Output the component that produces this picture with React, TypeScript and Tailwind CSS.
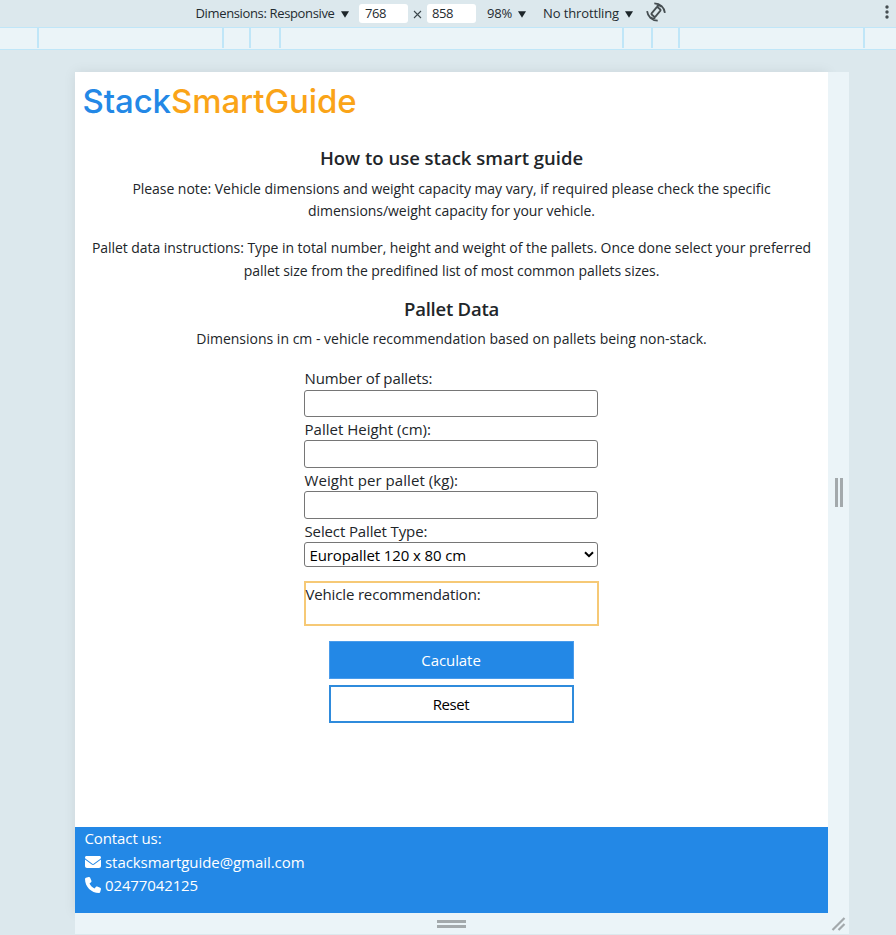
import type { ReactNode } from "react";

function Caret({ className = "" }: { className?: string }) {
  return (
    <svg width="8" height="7" viewBox="0 0 8 7" className={className}>
      <path d="M0 0.300h8L4 6.800z" fill="#1c2529" />
    </svg>
  );
}

function Toolbar() {
  return (
    <div className="flex h-[27px] items-center pl-[195.5px] text-[13px] text-[#1f2b30]">
      <span className="w-[145px] tracking-[-0.355px]">Dimensions: Responsive</span>
      <Caret className="mt-px" />
      <span className="ml-[10.5px] flex h-[19px] w-[49px] items-center rounded-[3px] bg-white pl-[6px] tracking-[-0.4px]">768</span>
      <svg width="9" height="9" viewBox="0 0 9 9" className="mt-[2px] ml-[5px]">
        <path d="M1 1l7 7M8 1l-7 7" stroke="#3c474c" strokeWidth="1.1" />
      </svg>
      <span className="ml-[5px] flex h-[19px] w-[49px] items-center rounded-[3px] bg-white pl-[5px] tracking-[-0.4px]">858</span>
      <span className="ml-[11px] w-[30.5px] tracking-[-0.2px]">98%</span>
      <Caret className="mt-px" />
      <span className="ml-[17.5px] w-[82px] tracking-[-0.12px]">No throttling</span>
      <Caret className="mt-px" />
      <svg width="20" height="20" viewBox="0 0 20 20" className="ml-[13px] -mt-[3px]" fill="none" stroke="#454d51" strokeWidth="1.8">
        <rect x="7.500" y="5.300" width="5" height="9.400" rx="0.800" transform="rotate(40 10 10)" />
        <path d="M18.900 10.800C18.300 5.600 14.300 1.500 8.300 1.400M10.900 4.300C12.300 3.300 14.200 3.300 15.600 4.800" />
        <path d="M1.100 9.200C1.700 14.400 5.700 18.500 11.700 18.600M9.100 15.700C7.700 16.700 5.800 16.700 4.400 15.200" />
      </svg>
      <svg width="4" height="14" viewBox="0 0 4 14" className="mr-[7px] -mt-[3px] ml-auto" fill="#454d51">
        <circle cx="2" cy="2" r="1.700" />
        <circle cx="2" cy="7" r="1.700" />
        <circle cx="2" cy="12" r="1.700" />
      </svg>
    </div>
  );
}

function Ruler() {
  return (
    <div className="flex h-[23px] border-y border-[#c0e6f8] bg-[#ebf4f8]">
      <div className="h-5 w-[39px] border-r-2 border-[#c0e6f8]" />
      <div className="h-5 w-[185px] border-r-2 border-[#c0e6f8]" />
      <div className="h-5 w-[27px] border-r-2 border-[#c0e6f8]" />
      <div className="h-5 w-[30px] border-r-2 border-[#c0e6f8]" />
      <div className="h-5 w-[343px] border-r-2 border-[#c0e6f8]" />
      <div className="h-5 w-[29px] border-r-2 border-[#c0e6f8]" />
      <div className="h-5 w-[27px] border-r-2 border-[#c0e6f8]" />
      <div className="h-5 w-[185px] border-r-2 border-[#c0e6f8]" />
    </div>
  );
}

function Field({ label, children }: { label: ReactNode; children: ReactNode }) {
  return (
    <label className="block">
      <span className="block h-[22px] pl-[0.5px] leading-[22px] whitespace-nowrap">{label}</span>
      {children}
    </label>
  );
}

const inputClass = "block w-full rounded-[3px] border border-[#767676] bg-white outline-none";

function Page() {
  return (
    <div className="flex h-[841px] w-[753px] flex-col bg-white text-[#212529] shadow-[0_0_12px_rgba(0,0,0,0.08)]">
      <h1 className="h-[74px] pt-[8px] pl-[7.500px] font-['Inter',sans-serif] text-[33px] leading-[42px] font-medium tracking-[-0.1px] text-[#2388e6]">
        Stack<span className="text-[#faa418]">SmartGuide</span>
      </h1>
      <section className="text-center text-[14px] leading-[22px] whitespace-nowrap">
        <h2 className="h-[32px] text-[18.5px] leading-[24px] font-semibold">How to use stack smart guide</h2>
        <p className="h-[58px] tracking-[-0.045px]">
          Please note: Vehicle dimensions and weight capacity may vary, if required please check the specific
          <br />
          dimensions/weight capacity for your vehicle.
        </p>
        <p className="h-[61px] leading-[23px] tracking-[-0.05px]">
          Pallet data instructions: Type in total number, height and weight of the pallets. Once done select your preferred
          <br />
          pallet size from the predifined list of most common pallets sizes.
        </p>
        <h2 className="h-[31px] text-[18.5px] leading-[24px] font-semibold tracking-[-0.23px]">Pallet Data</h2>
        <p className="h-[39px]">Dimensions in cm - vehicle recommendation based on pallets being non-stack.</p>
      </section>
      <form className="ml-[229px] flex w-[294px] flex-col text-[15px]">
        <Field label={<span className="tracking-[-0.11px]">Number of pallets:</span>}>
          <input className={`${inputClass} mt-px h-[27px]`} />
        </Field>
        <div className="mt-px">
          <Field label={<span className="tracking-[0.01px]">Pallet Height (cm):</span>}>
            <input className={`${inputClass} h-[28px]`} />
          </Field>
        </div>
        <div className="mt-px">
          <Field label={<span className="tracking-[0.07px]">Weight per pallet (kg):</span>}>
            <input className={`${inputClass} h-[28px]`} />
          </Field>
        </div>
        <div className="mt-px">
          <Field label={<span className="tracking-[-0.13px]">Select Pallet Type:</span>}>
            <span className="flex h-[25px] items-center justify-between rounded-[3px] border border-[#767676] pr-[3px] pl-[4.5px] text-black">
              <span className="pt-[2px] tracking-[-0.11px]">Europallet 120 x 80 cm</span>
              <svg width="10" height="7" viewBox="0 0 10 7" className="-mt-px">
                <path d="M1 1.200l4 4 4-4" fill="none" stroke="#000" strokeWidth="2" />
              </svg>
            </span>
          </Field>
        </div>
        <div className="mt-[14px] h-[45px] w-[295px] border-2 border-[#f6c976] leading-[23px] tracking-[-0.157px]">
          <span className="-ml-[0.5px]">Vehicle recommendation:</span>
        </div>
        <button type="button" className="mt-[15px] ml-[24.5px] h-[38px] w-[245px] border border-[#4a9ceb] bg-[#2388e6] tracking-[-0.07px] text-white">Caculate</button>
        <button type="button" className="mt-[6px] ml-[24.5px] h-[38px] w-[245px] border-2 border-[#2f8bdc] bg-white tracking-[-0.4px] text-black">Reset</button>
      </form>
      <footer className="mt-auto h-[86px] bg-[#2388e6] pl-[9.5px] text-[15px] leading-[23.5px] text-white">
        <p className="tracking-[-0.1px]">Contact us:</p>
        <p className="flex items-center gap-[4.5px] tracking-[-0.056px]">
          <svg width="16" height="16" viewBox="0 0 512 512" fill="currentColor">
            <path d="M48 64C21.500 64 0 85.500 0 112c0 15.100 7.100 29.300 19.200 38.400L236.800 313.600c11.400 8.500 27 8.500 38.400 0L492.800 150.400c12.100-9.100 19.200-23.300 19.200-38.400c0-26.500-21.500-48-48-48H48zM0 176V384c0 35.300 28.700 64 64 64H448c35.300 0 64-28.700 64-64V176L294.400 339.200c-22.800 17.100-54 17.100-76.800 0L0 176z" />
          </svg>
          stacksmartguide@gmail.com
        </p>
        <p className="flex items-center gap-[4.5px] tracking-[-0.12px]">
          <svg width="16" height="16" viewBox="0 0 512 512" fill="currentColor" className="-mt-[2px]">
            <path d="M164.900 24.600c-7.700-18.600-28-28.500-47.400-23.200l-88 24C12.100 30.200 0 46 0 64C0 311.400 200.600 512 448 512c18 0 33.800-12.100 38.600-29.500l24-88c5.300-19.400-4.600-39.700-23.200-47.400l-96-40c-16.300-6.800-35.200-2.100-46.300 11.600L304.700 368C234.300 334.700 177.300 277.700 144 207.300L193.300 167c13.700-11.200 18.400-30 11.600-46.300l-40-96z" />
          </svg>
          02477042125
        </p>
      </footer>
    </div>
  );
}

export default function App() {
  return (
    <div className="h-[935px] w-[896px] overflow-hidden bg-[#dce8ed] font-['Open_Sans','Noto_Sans',sans-serif]">
      <Toolbar />
      <Ruler />
      <main className="mt-[22px] ml-[75px] grid w-[774px] grid-cols-[753px_21px] grid-rows-[841px_21px]">
        <Page />
        <div className="z-10 flex items-center justify-center gap-[2px] bg-[#ebf4f8]">
          <span className="h-[29px] w-[3px] bg-[#a3a9ac]" />
          <span className="h-[29px] w-[3px] bg-[#a3a9ac]" />
        </div>
        <div className="z-10 flex flex-col items-center justify-center gap-[2px] bg-[#ebf4f8] pt-px">
          <span className="h-[3px] w-[29px] bg-[#a3a9ac]" />
          <span className="h-[3px] w-[29px] bg-[#a3a9ac]" />
        </div>
        <div className="z-10 bg-[#ebf4f8]">
          <svg width="21" height="21" viewBox="0 0 21 21">
            <path d="M4.500 17L16.500 5M10.500 17L16.500 11" stroke="#a3a9ac" strokeWidth="2.200" />
          </svg>
        </div>
      </main>
    </div>
  );
}
